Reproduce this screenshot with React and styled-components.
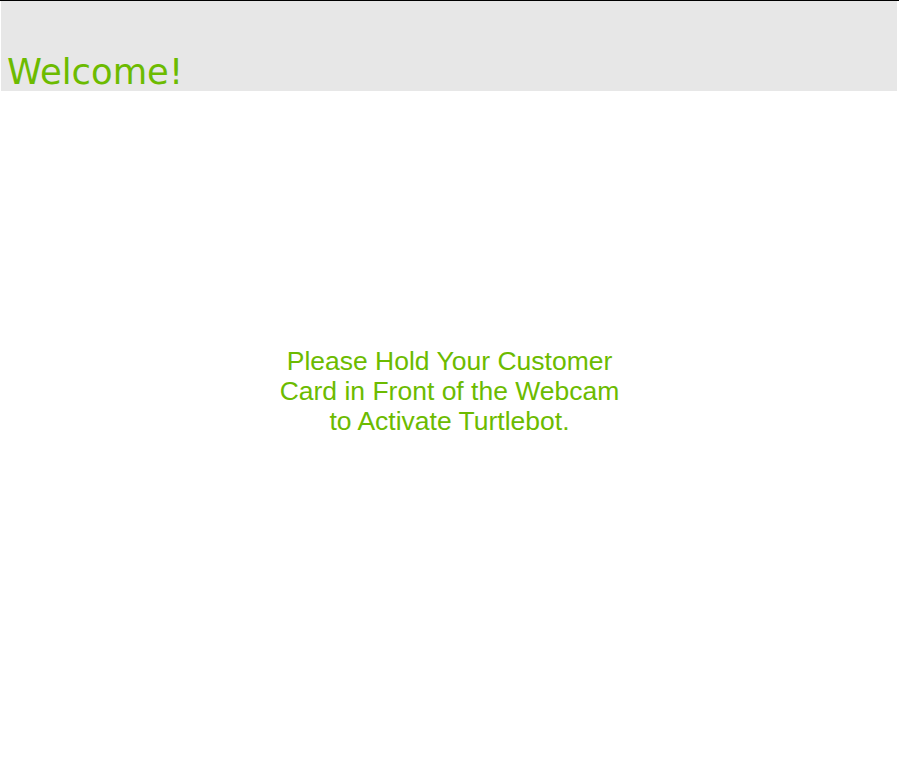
import styled, { createGlobalStyle } from 'styled-components';

const GlobalStyle = createGlobalStyle`
  html, body {
    margin: 0;
    padding: 0;
    background: #ffffff;
  }
`;

const Page = styled.div`
  min-height: 768px;
  border-top: 1px solid #000000;
  box-sizing: border-box;
`;

const Header = styled.header`
  display: flex;
  align-items: flex-end;
  height: 90px;
  margin: 0 2px 0 1px;
  padding: 0 0 2px 6px;
  box-sizing: border-box;
  background-color: #e7e7e7;
`;

const Title = styled.h1`
  margin: 0;
  font-family: 'DejaVu Sans', sans-serif;
  font-size: 35.4px;
  font-weight: 400;
  line-height: 1;
  color: #6cbb00;
`;

const Main = styled.main`
  display: flex;
  justify-content: center;
  padding-top: 255px;
`;

const Prompt = styled.p`
  margin: 0;
  font-family: 'Liberation Sans', Arial, sans-serif;
  font-size: 26.5px;
  line-height: 30px;
  text-align: center;
  color: #6cbb00;
`;

export default function App() {
  return (
    <>
      <GlobalStyle />
      <Page>
        <Header>
          <Title>Welcome!</Title>
        </Header>
        <Main>
          <Prompt>
            Please Hold Your Customer
            <br />
            Card in Front of the Webcam
            <br />
            to Activate Turtlebot.
          </Prompt>
        </Main>
      </Page>
    </>
  );
}
